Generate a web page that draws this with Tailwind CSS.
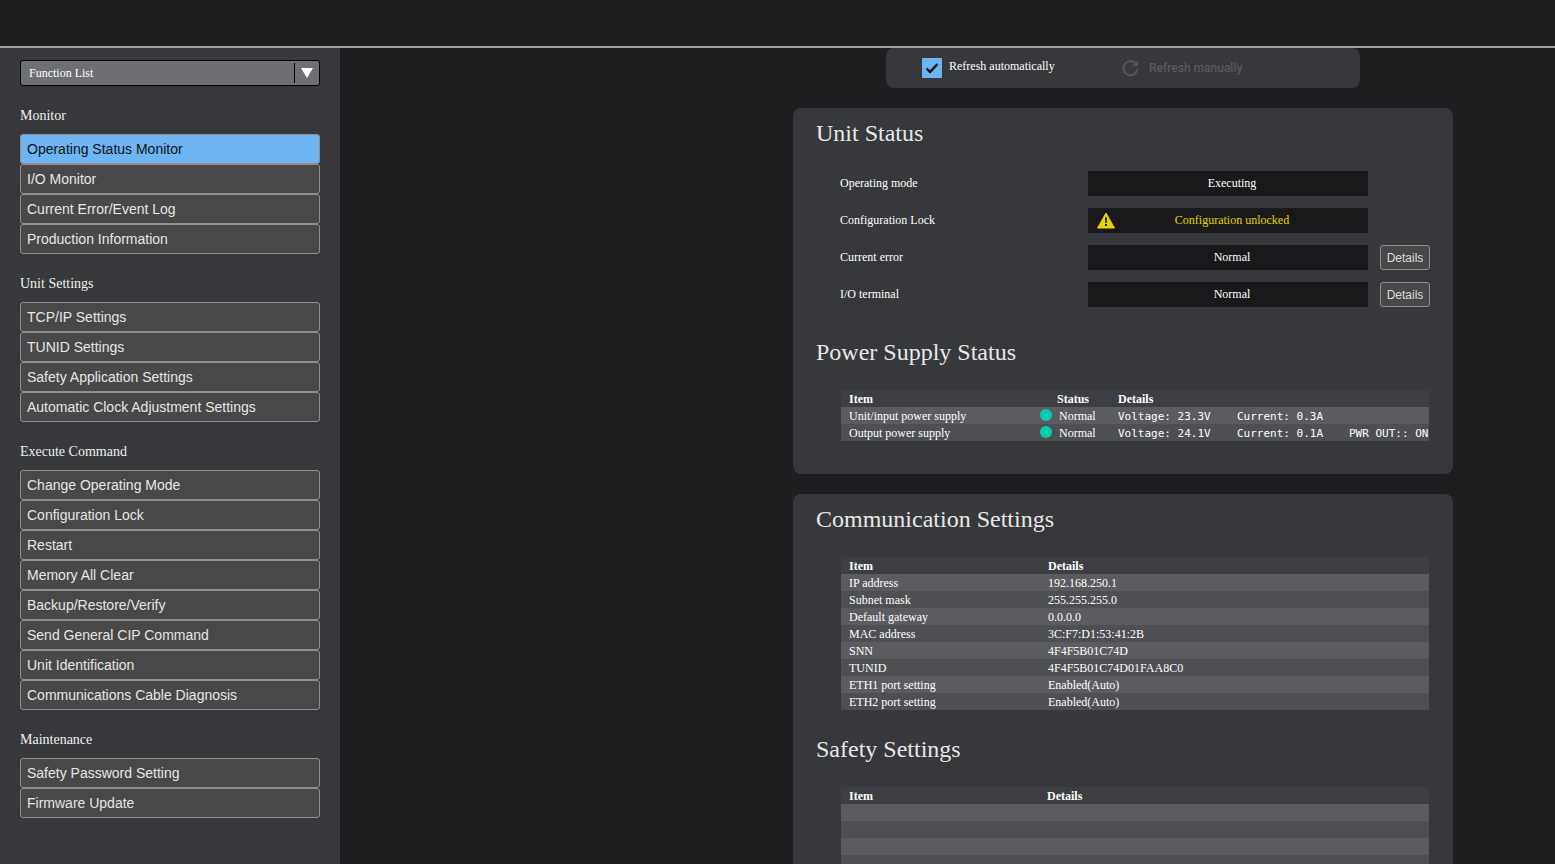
<!DOCTYPE html>
<html lang="en">
<head>
  <meta charset="UTF-8" />
  <title>Operating Status Monitor</title>
  <script src="https://cdn.jsdelivr.net/npm/@tailwindcss/browser@4"></script>
</head>
<body class="bg-[#1d1e20] h-[864px] overflow-hidden font-['Liberation_Serif',serif] text-[12px] text-white">

  <!-- Top bar -->
  <header class="h-[48px] bg-[#1d1e20] border-b-2 border-[#a3a3a3]"></header>

  <div class="flex h-[816px]">

    <!-- Sidebar -->
    <aside class="w-[340px] shrink-0 bg-[#37383b] px-[20px] pt-[12px]">
      <div class="flex items-center h-[26px] bg-[#6e6f73] border border-black rounded-[3px]">
        <span class="flex-1 pl-[8px]">Function List</span>
        <span class="w-px h-[20px] bg-black"></span>
        <span class="w-[24px] flex justify-center">
          <svg width="12" height="10" viewBox="0 0 12 10"><path d="M0 0h12L6 10z" fill="#fff"/></svg>
        </span>
      </div>

      <h2 class="text-[14px] leading-[20px] pt-[20px] pb-[8px] text-[#f0f0f0]">Monitor</h2>
      <nav class="flex flex-col font-['Liberation_Sans',sans-serif] text-[14px] text-[#e6e6e6]">
        <a class="h-[30px] px-[6px] flex items-center bg-[#6db5f3] border border-[#8f8f8f] rounded-[3px] text-[#111]">Operating Status Monitor</a>
        <a class="h-[30px] px-[6px] flex items-center bg-[#484848] border border-[#8f8f8f] rounded-[3px]">I/O Monitor</a>
        <a class="h-[30px] px-[6px] flex items-center bg-[#484848] border border-[#8f8f8f] rounded-[3px]">Current Error/Event Log</a>
        <a class="h-[30px] px-[6px] flex items-center bg-[#484848] border border-[#8f8f8f] rounded-[3px]">Production Information</a>
      </nav>

      <h2 class="text-[14px] leading-[20px] pt-[20px] pb-[8px] text-[#f0f0f0]">Unit Settings</h2>
      <nav class="flex flex-col font-['Liberation_Sans',sans-serif] text-[14px] text-[#e6e6e6]">
        <a class="h-[30px] px-[6px] flex items-center bg-[#484848] border border-[#8f8f8f] rounded-[3px]">TCP/IP Settings</a>
        <a class="h-[30px] px-[6px] flex items-center bg-[#484848] border border-[#8f8f8f] rounded-[3px]">TUNID Settings</a>
        <a class="h-[30px] px-[6px] flex items-center bg-[#484848] border border-[#8f8f8f] rounded-[3px]">Safety Application Settings</a>
        <a class="h-[30px] px-[6px] flex items-center bg-[#484848] border border-[#8f8f8f] rounded-[3px]">Automatic Clock Adjustment Settings</a>
      </nav>

      <h2 class="text-[14px] leading-[20px] pt-[20px] pb-[8px] text-[#f0f0f0]">Execute Command</h2>
      <nav class="flex flex-col font-['Liberation_Sans',sans-serif] text-[14px] text-[#e6e6e6]">
        <a class="h-[30px] px-[6px] flex items-center bg-[#484848] border border-[#8f8f8f] rounded-[3px]">Change Operating Mode</a>
        <a class="h-[30px] px-[6px] flex items-center bg-[#484848] border border-[#8f8f8f] rounded-[3px]">Configuration Lock</a>
        <a class="h-[30px] px-[6px] flex items-center bg-[#484848] border border-[#8f8f8f] rounded-[3px]">Restart</a>
        <a class="h-[30px] px-[6px] flex items-center bg-[#484848] border border-[#8f8f8f] rounded-[3px]">Memory All Clear</a>
        <a class="h-[30px] px-[6px] flex items-center bg-[#484848] border border-[#8f8f8f] rounded-[3px]">Backup/Restore/Verify</a>
        <a class="h-[30px] px-[6px] flex items-center bg-[#484848] border border-[#8f8f8f] rounded-[3px]">Send General CIP Command</a>
        <a class="h-[30px] px-[6px] flex items-center bg-[#484848] border border-[#8f8f8f] rounded-[3px]">Unit Identification</a>
        <a class="h-[30px] px-[6px] flex items-center bg-[#484848] border border-[#8f8f8f] rounded-[3px]">Communications Cable Diagnosis</a>
      </nav>

      <h2 class="text-[14px] leading-[20px] pt-[20px] pb-[8px] text-[#f0f0f0]">Maintenance</h2>
      <nav class="flex flex-col font-['Liberation_Sans',sans-serif] text-[14px] text-[#e6e6e6]">
        <a class="h-[30px] px-[6px] flex items-center bg-[#484848] border border-[#8f8f8f] rounded-[3px]">Safety Password Setting</a>
        <a class="h-[30px] px-[6px] flex items-center bg-[#484848] border border-[#8f8f8f] rounded-[3px]">Firmware Update</a>
      </nav>
    </aside>

    <!-- Main -->
    <main class="flex-1 overflow-hidden">

      <!-- Refresh bar -->
      <div class="ml-[546px] w-[474px] h-[40px] bg-[#37383b] rounded-[8px] flex items-center pl-[36px]">
        <span class="w-[20px] h-[20px] bg-[#6db5f3] flex items-center justify-center mt-[-1px]">
          <svg width="14" height="12" viewBox="0 0 14 12"><path d="M1.500 6.500 5 10l7.500-8" fill="none" stroke="#111" stroke-width="2.400"/></svg>
        </span>
        <span class="ml-[7px] w-[173px] mt-[-5px]">Refresh automatically</span>
        <svg class="w-[18px] h-[18px]" viewBox="0 0 18 18" fill="none" stroke="#55565a" stroke-width="2"><path d="M15.500 9.500A7 7 0 1 1 13 3.800"/><path d="M16 1v6h-6z" fill="#55565a" stroke="none"/></svg>
        <span class="ml-[9px] font-['Roboto',sans-serif] font-medium text-[12px] text-[#5a5b5f]">Refresh manually</span>
      </div>

      <!-- Unit Status card -->
      <section class="ml-[453px] mt-[20px] w-[660px] bg-[#37383b] rounded-[8px] pl-[23px] pt-[11px] pb-[33px]">
        <h1 class="text-[24px] leading-[28px] text-[#e8e8e8] mb-[24px]">Unit Status</h1>

        <div class="flex flex-col gap-[12px] pl-[24px]">
          <div class="flex items-center h-[25px]">
            <span class="w-[248px] mt-[-2px]">Operating mode</span>
            <span class="w-[280px] h-[25px] bg-[#19191b] flex items-center justify-center pb-[2px] pl-[8px]">Executing</span>
          </div>
          <div class="flex items-center h-[25px]">
            <span class="w-[248px] mt-[-2px]">Configuration Lock</span>
            <span class="relative w-[280px] h-[25px] bg-[#19191b] flex items-center justify-center pb-[2px] pl-[8px] text-[#e6d500]">
              <svg class="absolute left-[9px] top-[4px]" width="18" height="17" viewBox="0 0 18 17"><path d="M9 1 17.500 16H.5z" fill="#e6d500" stroke="#e6d500" stroke-linejoin="round"/><path d="M8 5.500h2L9.700 11H8.300z M8 12h2v2H8z" fill="#19191b"/></svg>
              Configuration unlocked
            </span>
          </div>
          <div class="flex items-center h-[25px]">
            <span class="w-[248px] mt-[-2px]">Current error</span>
            <span class="w-[280px] h-[25px] bg-[#19191b] flex items-center justify-center pb-[2px] pl-[8px]">Normal</span>
            <button class="ml-[12px] w-[50px] h-[25px] bg-[#484848] border border-[#8f8f8f] rounded-[3px] font-['Liberation_Sans',sans-serif] text-[#dcdcdc]">Details</button>
          </div>
          <div class="flex items-center h-[25px]">
            <span class="w-[248px] mt-[-2px]">I/O terminal</span>
            <span class="w-[280px] h-[25px] bg-[#19191b] flex items-center justify-center pb-[2px] pl-[8px]">Normal</span>
            <button class="ml-[12px] w-[50px] h-[25px] bg-[#484848] border border-[#8f8f8f] rounded-[3px] font-['Liberation_Sans',sans-serif] text-[#dcdcdc]">Details</button>
          </div>
        </div>

        <h1 class="text-[24px] leading-[28px] text-[#e8e8e8] mt-[31px] mb-[24px]">Power Supply Status</h1>

        <div class="ml-[25px] w-[588px] leading-[17px] overflow-hidden whitespace-nowrap">
          <div class="grid grid-cols-[199px_78px_1fr] h-[17px] pt-px bg-[#3d3e43] font-bold">
            <span class="pl-[8px]">Item</span><span class="pl-[17px]">Status</span><span>Details</span>
          </div>
          <div class="grid grid-cols-[199px_78px_1fr] h-[17px] pt-px bg-[#5b5b60]">
            <span class="pl-[8px]">Unit/input power supply</span>
            <span class="flex items-center"><i class="w-[12px] h-[12px] rounded-full bg-[#00cfae] mt-[-4px]"></i><span class="ml-[7px] mt-[-1px]">Normal</span></span>
            <span class="font-['DejaVu_Sans_Mono',monospace] text-[11px] flex"><span class="w-[119px]">Voltage: 23.3V</span><span>Current: 0.3A</span></span>
          </div>
          <div class="grid grid-cols-[199px_78px_1fr] h-[17px] pt-px bg-[#4e4f53]">
            <span class="pl-[8px]">Output power supply</span>
            <span class="flex items-center"><i class="w-[12px] h-[12px] rounded-full bg-[#00cfae] mt-[-4px]"></i><span class="ml-[7px] mt-[-1px]">Normal</span></span>
            <span class="font-['DejaVu_Sans_Mono',monospace] text-[11px] flex"><span class="w-[119px]">Voltage: 24.1V</span><span class="w-[112px]">Current: 0.1A</span><span>PWR OUT:: ON</span></span>
          </div>
        </div>
      </section>

      <!-- Communication / Safety card -->
      <section class="ml-[453px] mt-[20px] w-[660px] bg-[#37383b] rounded-[8px] pl-[23px] pt-[11px] pb-[33px]">
        <h1 class="text-[24px] leading-[28px] text-[#e8e8e8] mb-[24px]">Communication Settings</h1>

        <div class="ml-[25px] w-[588px] leading-[17px]">
          <div class="grid grid-cols-[207px_1fr] h-[17px] pt-px bg-[#3d3e43] font-bold"><span class="pl-[8px]">Item</span><span>Details</span></div>
          <div class="grid grid-cols-[207px_1fr] h-[17px] pt-px bg-[#5b5b60]"><span class="pl-[8px]">IP address</span><span>192.168.250.1</span></div>
          <div class="grid grid-cols-[207px_1fr] h-[17px] pt-px bg-[#4e4f53]"><span class="pl-[8px]">Subnet mask</span><span>255.255.255.0</span></div>
          <div class="grid grid-cols-[207px_1fr] h-[17px] pt-px bg-[#5b5b60]"><span class="pl-[8px]">Default gateway</span><span>0.0.0.0</span></div>
          <div class="grid grid-cols-[207px_1fr] h-[17px] pt-px bg-[#4e4f53]"><span class="pl-[8px]">MAC address</span><span>3C:F7:D1:53:41:2B</span></div>
          <div class="grid grid-cols-[207px_1fr] h-[17px] pt-px bg-[#5b5b60]"><span class="pl-[8px]">SNN</span><span>4F4F5B01C74D</span></div>
          <div class="grid grid-cols-[207px_1fr] h-[17px] pt-px bg-[#4e4f53]"><span class="pl-[8px]">TUNID</span><span>4F4F5B01C74D01FAA8C0</span></div>
          <div class="grid grid-cols-[207px_1fr] h-[17px] pt-px bg-[#5b5b60]"><span class="pl-[8px]">ETH1 port setting</span><span>Enabled(Auto)</span></div>
          <div class="grid grid-cols-[207px_1fr] h-[17px] pt-px bg-[#4e4f53]"><span class="pl-[8px]">ETH2 port setting</span><span>Enabled(Auto)</span></div>
        </div>

        <h1 class="text-[24px] leading-[28px] text-[#e8e8e8] mt-[25px] mb-[24px]">Safety Settings</h1>

        <div class="ml-[25px] w-[588px] leading-[17px]">
          <div class="grid grid-cols-[206px_1fr] h-[17px] pt-px bg-[#3d3e43] font-bold"><span class="pl-[8px]">Item</span><span>Details</span></div>
          <div class="h-[17px] bg-[#5b5b60]"></div>
          <div class="h-[17px] bg-[#4e4f53]"></div>
          <div class="h-[17px] bg-[#5b5b60]"></div>
          <div class="h-[17px] bg-[#4e4f53]"></div>
        </div>
      </section>
    </main>
  </div>
</body>
</html>
